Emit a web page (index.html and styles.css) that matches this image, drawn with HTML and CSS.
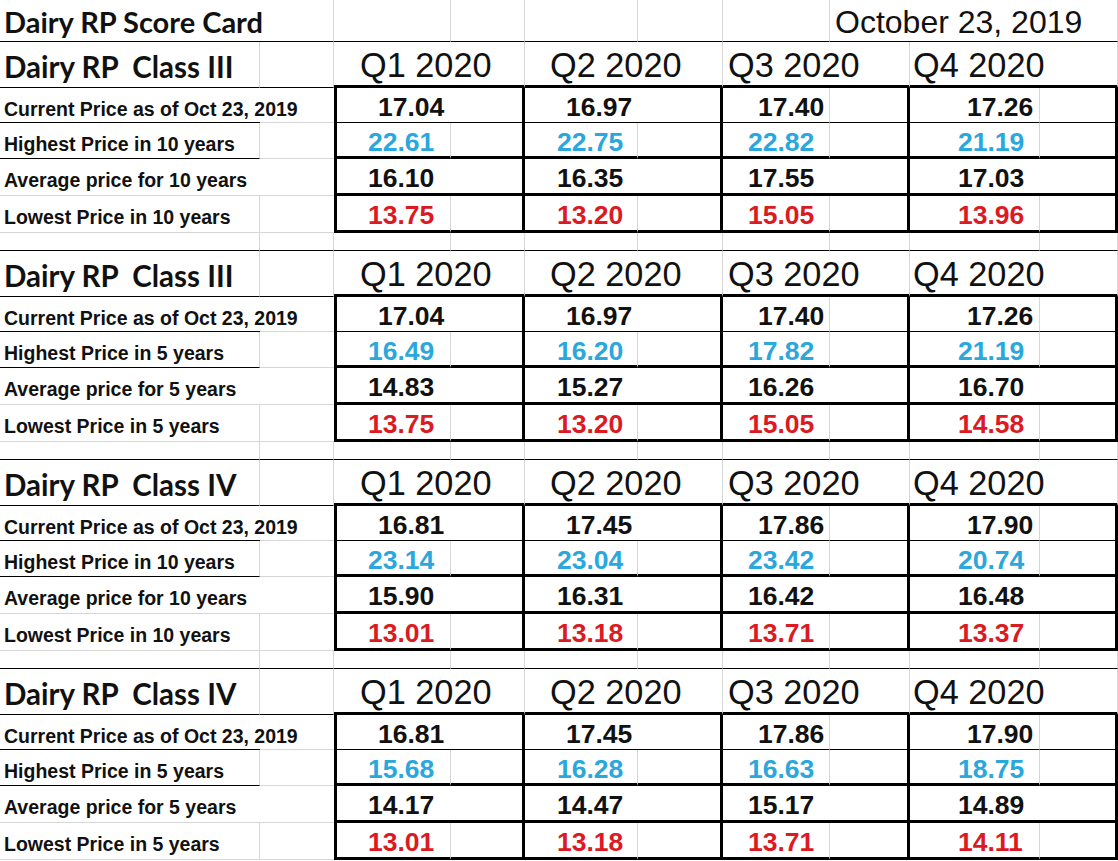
FILE: index.html
```html
<!DOCTYPE html>
<html lang="en">
<head>
<meta charset="utf-8">
<title>Dairy RP Score Card</title>
<link rel="stylesheet" href="styles.css">
</head>
<body>
<div class="sheet">
  <!-- title row -->
  <div class="cell title s2 kb">Dairy RP Score Card</div>
  <div class="cell kb"></div>
  <div class="cell kb"></div>
  <div class="cell kb"></div>
  <div class="cell kb"></div>
  <div class="cell kb"></div>
  <div class="cell date s3 kb">October 23, 2019</div>

  <!-- section 1 -->
  <div class="cell head kb">Dairy RP&nbsp; Class III</div>
  <div class="cell kb"></div>
  <div class="cell q s2 qa">Q1 2020</div>
  <div class="cell q s2 qb">Q2 2020</div>
  <div class="cell q s2 qc">Q3 2020</div>
  <div class="cell q s2 qd">Q4 2020</div>

  <div class="cell lbl kb nr">Current Price as of Oct 23, 2019</div>
  <div class="cell nr"></div>
  <div class="cell val s2 bl br thin v1 cur">17.04</div>
  <div class="cell val s2 br thin v2 cur">16.97</div>
  <div class="cell val thin v3 cur">17.40</div>
  <div class="cell br thin"></div>
  <div class="cell val thin v4 cur">17.26</div>
  <div class="cell br thin"></div>

  <div class="cell lbl kb">Highest Price in 10 years</div>
  <div class="cell nr"></div>
  <div class="cell val hi bl thick v1">22.61</div>
  <div class="cell br thick"></div>
  <div class="cell val hi thick v2">22.75</div>
  <div class="cell br thick"></div>
  <div class="cell val hi thick v3">22.82</div>
  <div class="cell br thick"></div>
  <div class="cell val hi thick v4">21.19</div>
  <div class="cell br thick"></div>

  <div class="cell lbl nr">Average price for 10 years</div>
  <div class="cell nr"></div>
  <div class="cell val s2 bl br thick v1">16.10</div>
  <div class="cell val s2 br thick v2">16.35</div>
  <div class="cell val s2 br thick v3">17.55</div>
  <div class="cell val s2 br thick v4">17.03</div>

  <div class="cell lbl">Lowest Price in 10 years</div>
  <div class="cell nr"></div>
  <div class="cell val lo bl thick v1">13.75</div>
  <div class="cell br thick"></div>
  <div class="cell val lo thick v2">13.20</div>
  <div class="cell br thick"></div>
  <div class="cell val lo thick v3">15.05</div>
  <div class="cell br thick"></div>
  <div class="cell val lo thick v4">13.96</div>
  <div class="cell br thick"></div>

  <div class="cell kb"></div><div class="cell kb"></div><div class="cell kb"></div><div class="cell kb"></div><div class="cell kb"></div>
  <div class="cell kb"></div><div class="cell kb"></div><div class="cell kb"></div><div class="cell kb"></div><div class="cell kb"></div>

  <!-- section 2 -->
  <div class="cell head kb">Dairy RP&nbsp; Class III</div>
  <div class="cell kb"></div>
  <div class="cell q s2 qa">Q1 2020</div>
  <div class="cell q s2 qb">Q2 2020</div>
  <div class="cell q s2 qc">Q3 2020</div>
  <div class="cell q s2 qd">Q4 2020</div>

  <div class="cell lbl kb nr">Current Price as of Oct 23, 2019</div>
  <div class="cell nr"></div>
  <div class="cell val s2 bl br thin v1 cur">17.04</div>
  <div class="cell val s2 br thin v2 cur">16.97</div>
  <div class="cell val thin v3 cur">17.40</div>
  <div class="cell br thin"></div>
  <div class="cell val thin v4 cur">17.26</div>
  <div class="cell br thin"></div>

  <div class="cell lbl kb">Highest Price in 5 years</div>
  <div class="cell nr"></div>
  <div class="cell val hi bl thick v1">16.49</div>
  <div class="cell br thick"></div>
  <div class="cell val hi thick v2">16.20</div>
  <div class="cell br thick"></div>
  <div class="cell val hi thick v3">17.82</div>
  <div class="cell br thick"></div>
  <div class="cell val hi thick v4">21.19</div>
  <div class="cell br thick"></div>

  <div class="cell lbl nr">Average price for 5 years</div>
  <div class="cell nr"></div>
  <div class="cell val s2 bl br thick v1">14.83</div>
  <div class="cell val s2 br thick v2">15.27</div>
  <div class="cell val s2 br thick v3">16.26</div>
  <div class="cell val s2 br thick v4">16.70</div>

  <div class="cell lbl">Lowest Price in 5 years</div>
  <div class="cell nr"></div>
  <div class="cell val lo bl thick v1">13.75</div>
  <div class="cell br thick"></div>
  <div class="cell val lo thick v2">13.20</div>
  <div class="cell br thick"></div>
  <div class="cell val lo thick v3">15.05</div>
  <div class="cell br thick"></div>
  <div class="cell val lo thick v4">14.58</div>
  <div class="cell br thick"></div>

  <div class="cell kb"></div><div class="cell kb"></div><div class="cell kb"></div><div class="cell kb"></div><div class="cell kb"></div>
  <div class="cell kb"></div><div class="cell kb"></div><div class="cell kb"></div><div class="cell kb"></div><div class="cell kb"></div>

  <!-- section 3 -->
  <div class="cell head kb">Dairy RP&nbsp; Class IV</div>
  <div class="cell kb"></div>
  <div class="cell q s2 qa">Q1 2020</div>
  <div class="cell q s2 qb">Q2 2020</div>
  <div class="cell q s2 qc">Q3 2020</div>
  <div class="cell q s2 qd">Q4 2020</div>

  <div class="cell lbl kb nr">Current Price as of Oct 23, 2019</div>
  <div class="cell nr"></div>
  <div class="cell val s2 bl br thin v1 cur">16.81</div>
  <div class="cell val s2 br thin v2 cur">17.45</div>
  <div class="cell val thin v3 cur">17.86</div>
  <div class="cell br thin"></div>
  <div class="cell val thin v4 cur">17.90</div>
  <div class="cell br thin"></div>

  <div class="cell lbl kb">Highest Price in 10 years</div>
  <div class="cell nr"></div>
  <div class="cell val hi bl thick v1">23.14</div>
  <div class="cell br thick"></div>
  <div class="cell val hi thick v2">23.04</div>
  <div class="cell br thick"></div>
  <div class="cell val hi thick v3">23.42</div>
  <div class="cell br thick"></div>
  <div class="cell val hi thick v4">20.74</div>
  <div class="cell br thick"></div>

  <div class="cell lbl nr">Average price for 10 years</div>
  <div class="cell nr"></div>
  <div class="cell val s2 bl br thick v1">15.90</div>
  <div class="cell val s2 br thick v2">16.31</div>
  <div class="cell val s2 br thick v3">16.42</div>
  <div class="cell val s2 br thick v4">16.48</div>

  <div class="cell lbl">Lowest Price in 10 years</div>
  <div class="cell nr"></div>
  <div class="cell val lo bl thick v1">13.01</div>
  <div class="cell br thick"></div>
  <div class="cell val lo thick v2">13.18</div>
  <div class="cell br thick"></div>
  <div class="cell val lo thick v3">13.71</div>
  <div class="cell br thick"></div>
  <div class="cell val lo thick v4">13.37</div>
  <div class="cell br thick"></div>

  <div class="cell kb"></div><div class="cell kb"></div><div class="cell kb"></div><div class="cell kb"></div><div class="cell kb"></div>
  <div class="cell kb"></div><div class="cell kb"></div><div class="cell kb"></div><div class="cell kb"></div><div class="cell kb"></div>

  <!-- section 4 -->
  <div class="cell head kb">Dairy RP&nbsp; Class IV</div>
  <div class="cell kb"></div>
  <div class="cell q s2 qa">Q1 2020</div>
  <div class="cell q s2 qb">Q2 2020</div>
  <div class="cell q s2 qc">Q3 2020</div>
  <div class="cell q s2 qd">Q4 2020</div>

  <div class="cell lbl kb nr">Current Price as of Oct 23, 2019</div>
  <div class="cell nr"></div>
  <div class="cell val s2 bl br thin v1 cur">16.81</div>
  <div class="cell val s2 br thin v2 cur">17.45</div>
  <div class="cell val thin v3 cur">17.86</div>
  <div class="cell br thin"></div>
  <div class="cell val thin v4 cur">17.90</div>
  <div class="cell br thin"></div>

  <div class="cell lbl kb">Highest Price in 5 years</div>
  <div class="cell nr"></div>
  <div class="cell val hi bl thick v1">15.68</div>
  <div class="cell br thick"></div>
  <div class="cell val hi thick v2">16.28</div>
  <div class="cell br thick"></div>
  <div class="cell val hi thick v3">16.63</div>
  <div class="cell br thick"></div>
  <div class="cell val hi thick v4">18.75</div>
  <div class="cell br thick"></div>

  <div class="cell lbl nr">Average price for 5 years</div>
  <div class="cell nr"></div>
  <div class="cell val s2 bl br thick v1">14.17</div>
  <div class="cell val s2 br thick v2">14.47</div>
  <div class="cell val s2 br thick v3">15.17</div>
  <div class="cell val s2 br thick v4">14.89</div>

  <div class="cell lbl">Lowest Price in 5 years</div>
  <div class="cell nr"></div>
  <div class="cell val lo bl thick v1">13.01</div>
  <div class="cell br thick"></div>
  <div class="cell val lo thick v2">13.18</div>
  <div class="cell br thick"></div>
  <div class="cell val lo thick v3">13.71</div>
  <div class="cell br thick"></div>
  <div class="cell val lo thick v4">14.11</div>
  <div class="cell br thick"></div>
</div>
</body>
</html>
```

FILE: styles.css
```css
html, body {
  margin: 0;
  padding: 0;
  background: #ffffff;
  overflow: hidden;
}

.sheet {
  display: grid;
  grid-template-columns: 260px 74px 117px 74px 113px 85px 107px 80px 130px 78px;
  grid-template-rows:
    42px
    46px 35px 36px 37px 37px 18px
    46px 35px 36px 37px 37px 18px
    46px 35px 36px 37px 37px 18px
    46px 35px 36px 37px 37px;
  color: #111111;
  font-family: "Liberation Sans", Arial, sans-serif;
}

.cell {
  box-sizing: border-box;
  border-right: 1px solid #d6d6d6;
  border-bottom: 1px solid #d6d6d6;
  white-space: nowrap;
  line-height: 1;
  min-width: 0;
}

.s2 { grid-column: span 2; }
.s3 { grid-column: span 3; }

.kb { border-bottom-color: #000000; }
.nr { border-right: none; }
.bl { border-left: 3px solid #000000; }
.br { border-right: 3px solid #000000; }
.thin { border-bottom: 1px solid #000000; }
.thick { border-bottom: 3px solid #000000; }

.title,
.head {
  font-family: Lato, "Open Sans", sans-serif;
  font-weight: 700;
  padding-left: 4px;
}
.title {
  font-size: 29px;
  padding-top: 7px;
}
.head {
  font-size: 29.5px;
  padding-top: 10px;
}

.date {
  font-size: 32px;
  padding-left: 5px;
  padding-top: 6px;
}

.q {
  font-size: 34.3px;
  padding-top: 6px;
  border-bottom: 3px solid #000000;
}
.qa { padding-left: 26px; }
.qb { padding-left: 25px; }
.qc { padding-left: 5px; }
.qd { padding-left: 3px; }

.lbl {
  font-weight: 700;
  font-size: 19.5px;
  padding-left: 4px;
  padding-top: 11.5px;
}

.val {
  font-weight: 700;
  font-size: 26.5px;
  padding-top: 5.5px;
}
.hi { color: #2aa7dd; }
.lo { color: #dc1a22; }

.v1 { padding-left: 31px; }
.v2 { padding-left: 32px; }
.v3 { padding-left: 25px; }
.v4 { padding-left: 48px; }
.v1.cur { padding-left: 41px; }
.v2.cur { padding-left: 41px; }
.v3.cur { padding-left: 35px; }
.v4.cur { padding-left: 57px; }
```
